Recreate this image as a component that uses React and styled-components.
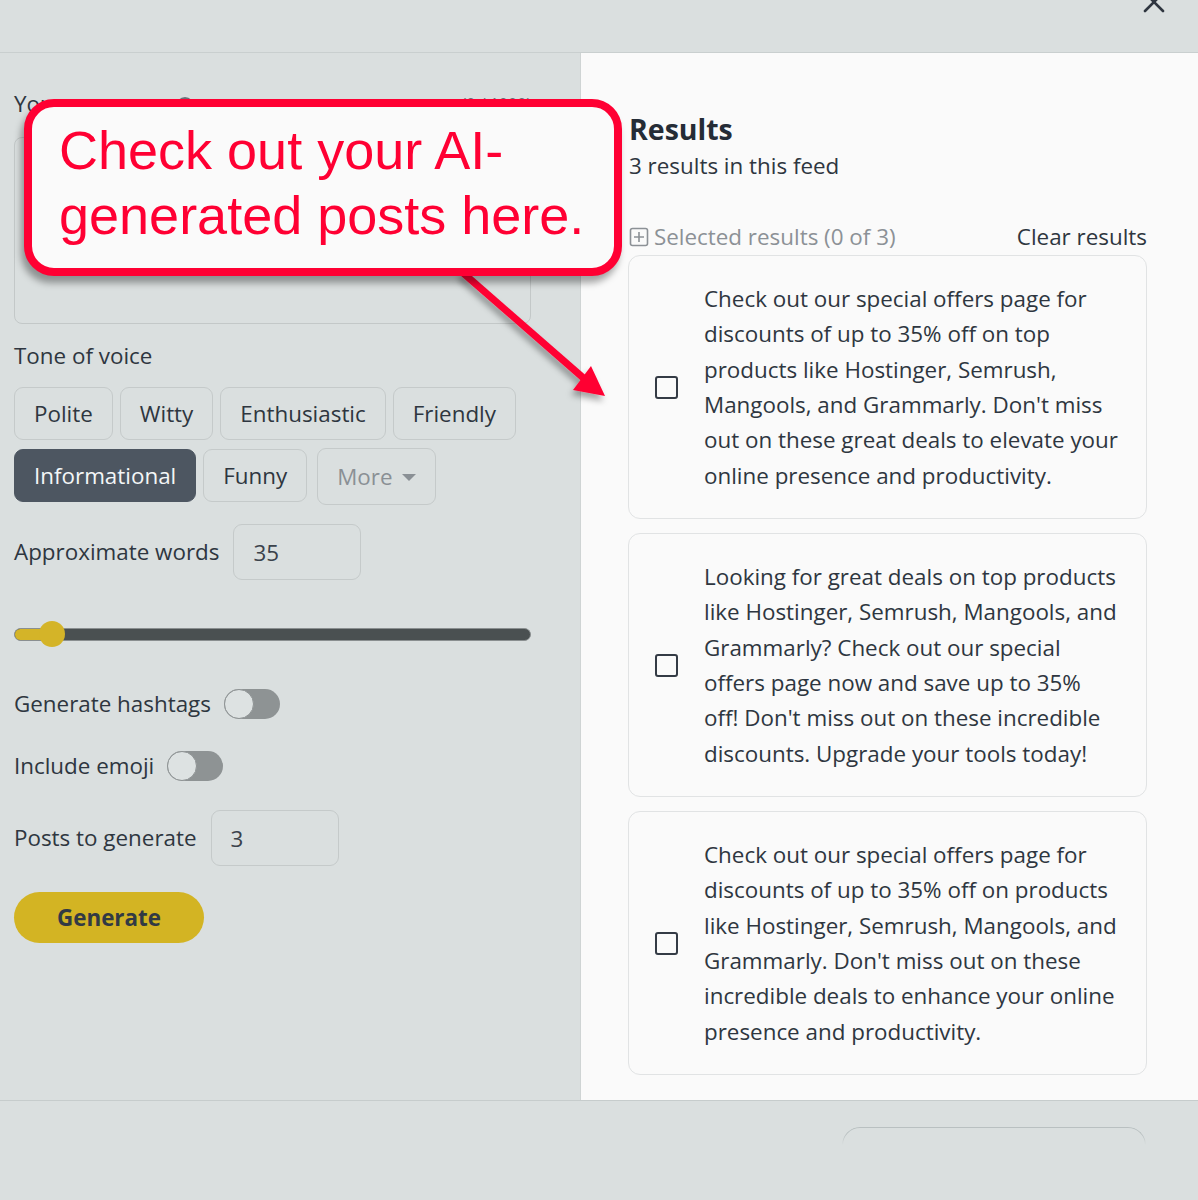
import React from "react";
import styled, { createGlobalStyle } from "styled-components";

const Global = createGlobalStyle`
  html, body { margin: 0; padding: 0; }
  body {
    font-family: "Open Sans", "Noto Sans", sans-serif;
    color: #2e3640;
    background: #dadfdf;
  }
  * { box-sizing: border-box; }
`;

const FS = "22.4px";

const Page = styled.div`
  position: relative;
  width: 1198px;
  height: 1200px;
  display: flex;
  flex-direction: column;
  background: #dadfdf;
  overflow: hidden;
`;

const Header = styled.div`
  height: 53px;
  flex: none;
  display: flex;
  justify-content: flex-end;
  align-items: flex-start;
  padding-right: 33px;
  border-bottom: 1px solid #c9cfcf;
`;

const CloseBtn = styled.svg`
  width: 22px;
  height: 22px;
  margin-top: -9px;
`;

const Body = styled.div`
  height: 1048px;
  flex: none;
  display: flex;
  border-bottom: 1px solid #c6cccc;
`;

const Left = styled.div`
  width: 581px;
  flex: none;
  padding: 37px 49px 0 14px;
  border-right: 1px solid #cfd4d4;
  display: flex;
  flex-direction: column;
  align-items: flex-start;
`;

const Label = styled.div`
  font-size: ${FS};
  line-height: 28px;
  color: #2e3640;
  white-space: nowrap;
  margin-top: ${(p) => p.$mt || 0}px;
`;

const LabelRow = styled.div`
  width: 100%;
  display: flex;
  align-items: center;
  justify-content: space-between;
`;

const InfoDot = styled.span`
  display: inline-block;
  width: 18px;
  height: 18px;
  border-radius: 50%;
  background: #6b7279;
  margin-left: 10px;
  vertical-align: middle;
`;

const Counter = styled.span`
  font-size: 16px;
  color: #6b7279;
`;

const TextArea = styled.div`
  width: 100%;
  height: 187px;
  margin-top: 19px;
  border: 1px solid #c3c8c8;
  border-radius: 8px;
`;

const ChipRows = styled.div`
  margin-top: 17px;
  display: flex;
  flex-direction: column;
  gap: 9px;
`;

const ChipRow = styled.div`
  display: flex;
  align-items: flex-start;
  gap: 7px;
`;

const Chip = styled.div`
  height: ${(p) => (p.$tall ? 57 : 53)}px;
  margin-top: ${(p) => (p.$tall ? -1 : 0)}px;
  padding: 0 19px;
  display: flex;
  align-items: center;
  gap: 9px;
  font-size: ${FS};
  border-radius: 9px;
  border: 1px solid ${(p) => (p.$active ? "#4d5661" : "#c5caca")};
  background: ${(p) => (p.$active ? "#4d5661" : "transparent")};
  color: ${(p) => (p.$active ? "#f4f6f7" : p.$muted ? "#8a9095" : "#2e3640")};
  margin-left: ${(p) => p.$ml || 0}px;
`;

const Caret = styled.span`
  width: 0;
  height: 0;
  border-left: 7px solid transparent;
  border-right: 7px solid transparent;
  border-top: 7px solid #8a9095;
  margin-top: 2px;
`;

const FieldRow = styled.div`
  display: flex;
  align-items: center;
  gap: ${(p) => p.$gap || 14}px;
  margin-top: ${(p) => p.$mt || 0}px;
  height: ${(p) => p.$h || 56}px;
`;

const NumInput = styled.div`
  width: 128px;
  height: 56px;
  border: 1px solid #c5caca;
  border-radius: 9px;
  padding-left: 19px;
  display: flex;
  align-items: center;
  font-size: ${FS};
  color: #3b424b;
`;

const SliderWrap = styled.div`
  margin-top: 40px;
  width: 100%;
  height: 28px;
  position: relative;
  display: flex;
  align-items: center;
`;

const Track = styled.div`
  width: 100%;
  height: 13px;
  border-radius: 7px;
  background: #4a5051;
  border: 1px solid #8a8f90;
  overflow: hidden;
  display: flex;
`;

const Fill = styled.div`
  height: 100%;
  background: #d4b428;
`;

const Thumb = styled.div`
  position: absolute;
  top: 1px;
  width: 26px;
  height: 26px;
  border-radius: 50%;
  background: #d4b428;
  transform: translateX(-13px);
`;

const Toggle = styled.div`
  width: 56px;
  height: 30px;
  border-radius: 15px;
  background: #8e9394;
  position: relative;
  flex: none;
`;

const Knob = styled.div`
  position: absolute;
  left: 0;
  top: 0;
  width: 30px;
  height: 30px;
  border-radius: 50%;
  background: #dde2e2;
  border: 1px solid #8e9394;
`;

const GenerateBtn = styled.div`
  margin-top: 26px;
  width: 190px;
  height: 51px;
  border-radius: 26px;
  background: #d3b423;
  color: #323a44;
  font-size: ${FS};
  font-weight: 700;
  display: flex;
  align-items: center;
  justify-content: center;
`;

const Right = styled.div`
  flex: 1;
  background: #fafafa;
  padding: 59px 51px 0 47px;
  display: flex;
  flex-direction: column;
`;

const Title = styled.div`
  font-size: 28.5px;
  line-height: 34px;
  font-weight: 700;
  color: #252c36;
  padding-left: 1px;
`;

const Sub = styled.div`
  margin-top: 6px;
  padding-left: 1px;
  font-size: ${FS};
  line-height: 28px;
  color: #2e3640;
`;

const SelectedRow = styled.div`
  margin-top: 43px;
  padding-left: 1px;
  display: flex;
  justify-content: space-between;
  align-items: center;
  font-size: ${FS};
  line-height: 28px;
`;

const SelectedLabel = styled.div`
  display: flex;
  align-items: center;
  gap: 5px;
  color: #8c9196;
`;

const ClearBtn = styled.div`
  color: #2e3640;
`;

const Cards = styled.div`
  margin-top: 4px;
  display: flex;
  flex-direction: column;
  gap: 14px;
`;

const Card = styled.div`
  height: ${(p) => p.$h}px;
  border: 1px solid #e1e3e4;
  border-radius: 12px;
  background: #fafafa;
  padding: 0 20px 0 26px;
  display: flex;
  align-items: center;
  gap: 26px;
`;

const Box = styled.div`
  width: 23px;
  height: 23px;
  border: 2px solid #343b45;
  border-radius: 3px;
  flex: none;
`;

const CardText = styled.div`
  width: 415px;
  font-size: ${FS};
  line-height: 35.3px;
  color: #2e3640;
`;

const Footer = styled.div`
  flex: 1;
  display: flex;
  justify-content: flex-end;
  padding: 26px 52px 0 0;
`;

const GhostBtn = styled.div`
  width: 304px;
  height: 18px;
  border: 1px solid #b9c0c1;
  border-bottom: none;
  border-radius: 20px 20px 0 0;
  -webkit-mask-image: linear-gradient(#000 40%, transparent);
  mask-image: linear-gradient(#000 40%, transparent);
`;

const Callout = styled.div`
  position: absolute;
  left: 24px;
  top: 99px;
  width: 598px;
  height: 177px;
  border: 8px solid #ff0033;
  border-radius: 30px;
  background: #fafafa;
  box-shadow: -3px 7px 7px rgba(0, 0, 0, 0.35);
  padding: 11px 0 0 27px;
  font-family: "Liberation Sans", Arial, sans-serif;
  font-size: 54px;
  line-height: 65px;
  color: #ff0033;
  z-index: 2;
`;

const Arrow = styled.svg`
  position: absolute;
  left: 440px;
  top: 262px;
  width: 190px;
  height: 160px;
  z-index: 1;
  overflow: visible;
`;

const cards = [
  {
    h: 264,
    text:
      "Check out our special offers page for discounts of up to 35% off on top products like Hostinger, Semrush, Mangools, and Grammarly. Don't miss out on these great deals to elevate your online presence and productivity.",
  },
  {
    h: 264,
    text:
      "Looking for great deals on top products like Hostinger, Semrush, Mangools, and Grammarly? Check out our special offers page now and save up to 35% off! Don't miss out on these incredible discounts. Upgrade your tools today!",
  },
  {
    h: 264,
    text:
      "Check out our special offers page for discounts of up to 35% off on products like Hostinger, Semrush, Mangools, and Grammarly. Don't miss out on these incredible deals to enhance your online presence and productivity.",
  },
];

export default function App() {
  return (
    <Page>
      <Global />
      <Header>
        <CloseBtn viewBox="0 0 22 22">
          <path d="M2 2 L20 20 M20 2 L2 20" stroke="#2f3640" strokeWidth="2.6" strokeLinecap="round" />
        </CloseBtn>
      </Header>
      <Body>
        <Left>
          <LabelRow>
            <Label>
              Your message <InfoDot />
            </Label>
            <Counter>(0 / 1000)</Counter>
          </LabelRow>
          <TextArea />
          <Label $mt={18}>Tone of voice</Label>
          <ChipRows>
            <ChipRow>
              <Chip>Polite</Chip>
              <Chip>Witty</Chip>
              <Chip>Enthusiastic</Chip>
              <Chip>Friendly</Chip>
            </ChipRow>
            <ChipRow>
              <Chip $active>Informational</Chip>
              <Chip>Funny</Chip>
              <Chip $tall $muted $ml={3}>
                More <Caret />
              </Chip>
            </ChipRow>
          </ChipRows>
          <FieldRow $mt={19}>
            <Label>Approximate words</Label>
            <NumInput>35</NumInput>
          </FieldRow>
          <SliderWrap>
            <Track>
              <Fill style={{ width: "7.4%" }} />
            </Track>
            <Thumb style={{ left: "7.4%" }} />
          </SliderWrap>
          <FieldRow $mt={41} $h={30} $gap={13}>
            <Label>Generate hashtags</Label>
            <Toggle>
              <Knob />
            </Toggle>
          </FieldRow>
          <FieldRow $mt={32} $h={30} $gap={13}>
            <Label>Include emoji</Label>
            <Toggle>
              <Knob />
            </Toggle>
          </FieldRow>
          <FieldRow $mt={29}>
            <Label>Posts to generate</Label>
            <NumInput>3</NumInput>
          </FieldRow>
          <GenerateBtn>Generate</GenerateBtn>
        </Left>
        <Right>
          <Title>Results</Title>
          <Sub>3 results in this feed</Sub>
          <SelectedRow>
            <SelectedLabel>
              <svg width="20" height="20" viewBox="0 0 20 20">
                <rect x="1.5" y="1.5" width="17" height="17" rx="2" fill="none" stroke="#8c9196" strokeWidth="1.6" />
                <path d="M10 5 V15 M5 10 H15" stroke="#8c9196" strokeWidth="1.6" />
              </svg>
              Selected results (0 of 3)
            </SelectedLabel>
            <ClearBtn>Clear results</ClearBtn>
          </SelectedRow>
          <Cards>
            {cards.map((c, i) => (
              <Card key={i} $h={c.h}>
                <Box />
                <CardText>{c.text}</CardText>
              </Card>
            ))}
          </Cards>
        </Right>
      </Body>
      <Footer>
        <GhostBtn />
      </Footer>
      <Callout>
        Check out your AI-
        <br />
        generated posts here.
      </Callout>
      <Arrow viewBox="0 0 190 160">
        <defs>
          <filter id="sh" x="-20%" y="-20%" width="150%" height="150%">
            <feDropShadow dx="-2" dy="5" stdDeviation="3" floodColor="#000" floodOpacity="0.35" />
          </filter>
        </defs>
        <g filter="url(#sh)">
          <path d="M22 10 L148 120" stroke="#ff0033" strokeWidth="7" strokeLinecap="butt" />
          <polygon points="165,134 133,128 151,104" fill="#ff0033" />
        </g>
      </Arrow>
    </Page>
  );
}
